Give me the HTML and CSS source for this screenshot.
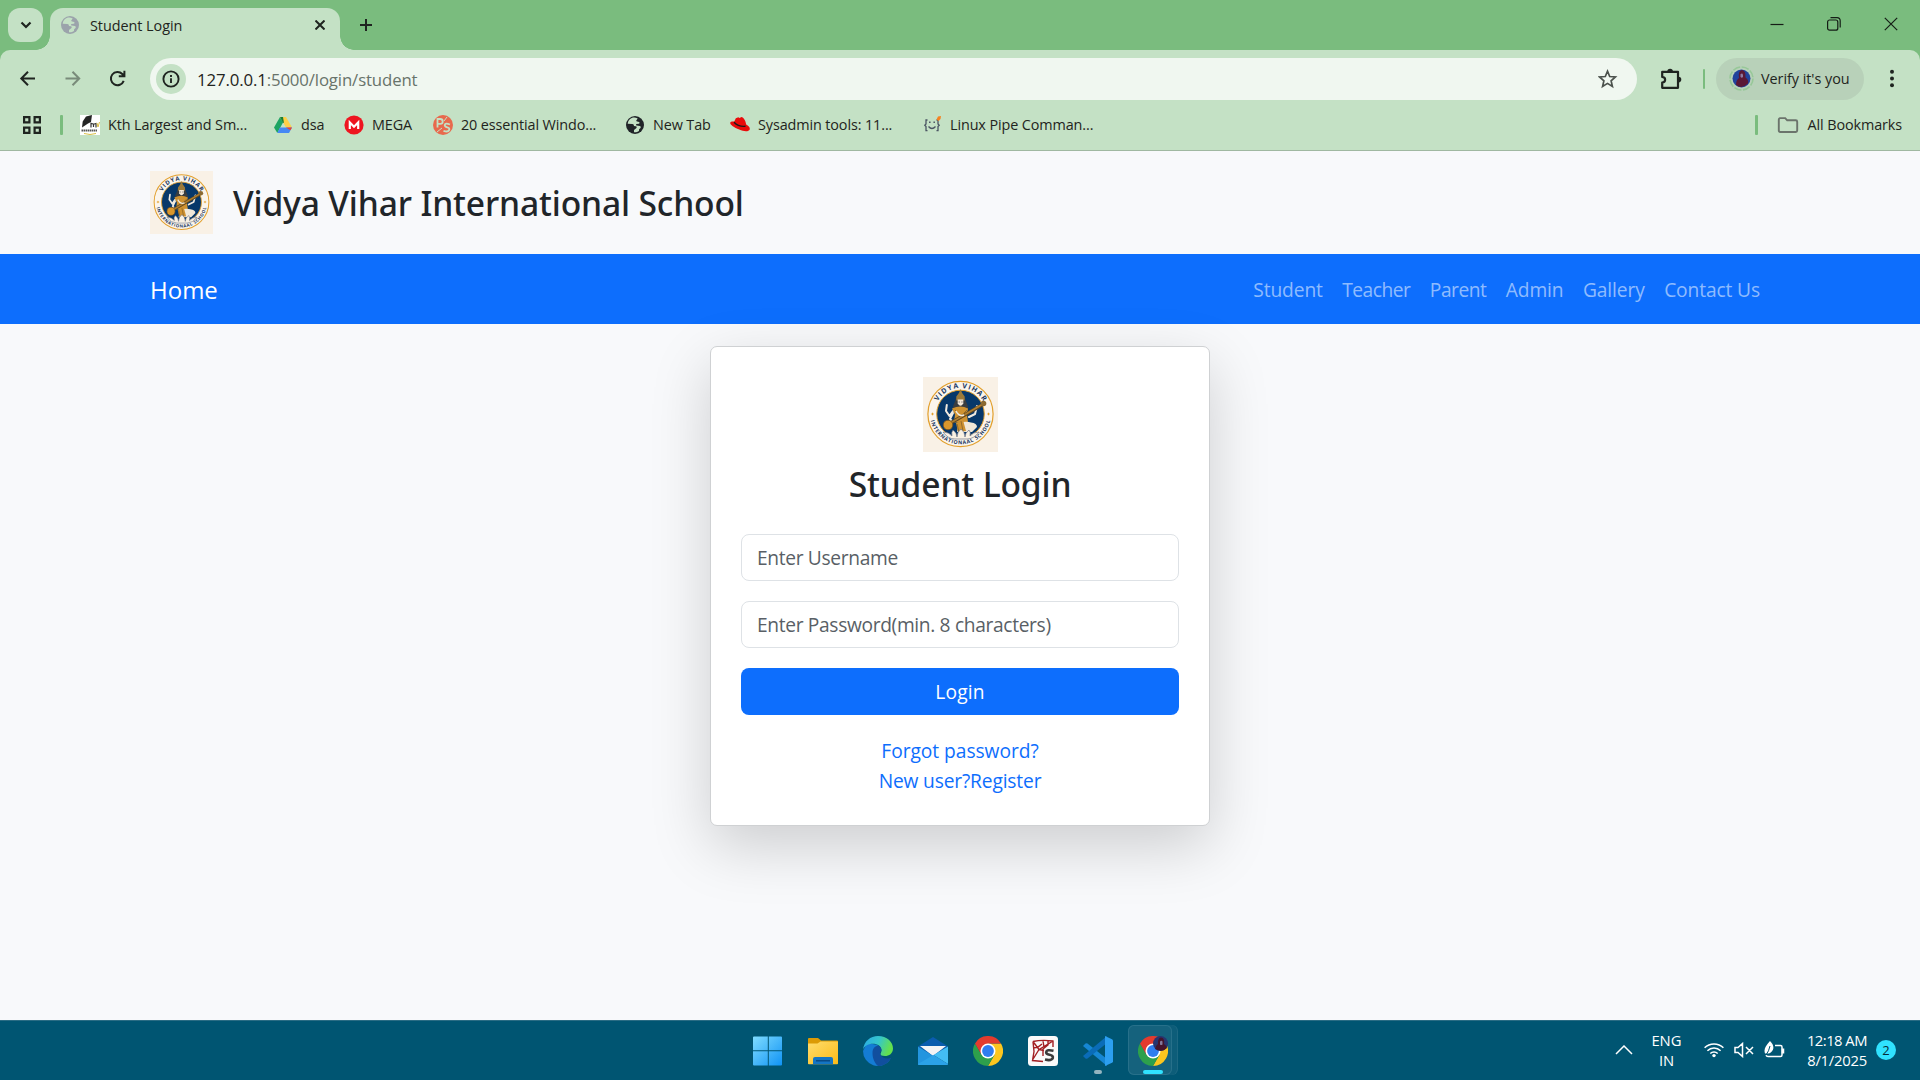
FILE: index.html
```html
<!DOCTYPE html>
<html lang="en">
<head>
<meta charset="utf-8">
<title>Student Login</title>
<link rel="stylesheet" href="styles.css">
</head>
<body>
<svg width="0" height="0" class="defs" aria-hidden="true">
  <defs>
    <symbol id="globe" viewBox="0 0 18 18">
      <circle cx="9" cy="9" r="9" fill="currentColor"/>
      <path class="land" d="M6.2 1.8C3.6 2.8 1.9 5 1.7 7.8l4.6.2c1.1.1 1.8.9 1.6 2l1.9.2c1 .2 1.2 1.3.4 2L8 14v2.3c1.9.2 3.600-.3 5-1.400l.1-1.600 1.400-1.200c.5-.8.2-1.600-.7-2l-3.200-.5c-.8-.3-.8-1.300-.1-1.700l2.300-.2c.8-.2 1-1.200.3-1.700l-2-.4c-1-.2-1.100-1.400-.3-1.900l.9-1.100C9.700 1.300 8 1.200 6.200 1.800z"/>
    </symbol>
    <symbol id="chrome" viewBox="0 0 30 30">
      <path fill="#fcc61f" d="M15 7.500h13A15 15 0 0 1 15 30l6.500-11.250z"/>
      <path fill="#2da04c" d="M2 7.500A15 15 0 0 0 15 30l6.500-11.250L15 15l-6.500 3.750z"/>
      <path fill="#e33b2e" d="M2 7.500A15 15 0 0 1 28 7.500H15l-6.500 11.250z"/>
      <circle cx="15" cy="15" r="7.500" fill="#fff"/>
      <circle cx="15" cy="15" r="5.900" fill="#2f7df0"/>
    </symbol>
    <symbol id="crest" viewBox="0 0 75 75">
      <path fill="#f9f1e6" d="M0 0h75v75H0z"/>
      <circle cx="37.500" cy="37" r="32.600" fill="#fbf5ec" stroke="#e2a02e" stroke-width="1.200"/>
      <circle cx="37.500" cy="37" r="23.800" fill="#07386a" stroke="#e2a02e" stroke-width="1"/>
      <path id="arc-top" fill="none" d="M11.500 37a26 26 0 0 1 52 0"/>
      <path id="arc-bottom" fill="none" d="M7.100 37a30.400 30.400 0 0 0 60.800 0"/>
      <text class="crest-top"><textPath href="#arc-top" startOffset="50%" textLength="55">VIDYA VIHAR</textPath></text>
      <text class="crest-bottom"><textPath href="#arc-bottom" startOffset="50%" textLength="82">INTERNATIONAAL SCHOOL</textPath></text>
      <path fill="#e2a02e" d="m9.500 35.200.6 1.200 1.300.6-1.300.6-.6 1.200-.6-1.200-1.300-.6 1.300-.6zM65.500 35.200l.6 1.200 1.300.6-1.300.6-.6 1.200-.6-1.200-1.300-.6 1.300-.6z"/>
      <path fill="#3a3d40" d="M33 21c-1 5-4 8-3 12h15c1-4-2-7-3-12z"/>
      <path fill="#9c7a3a" d="m37.500 12 1.600 4 2.600 3.500v4h-8.400v-4l2.600-3.500z"/>
      <path fill="#f3e8da" d="M34.700 22.500h5.600v4q-2.800 4.500-5.600 0z"/>
      <path stroke="#3a3d40" stroke-width=".6" d="M35.500 25h1.500M38.200 25h1.500"/>
      <path fill="none" stroke="#f1eadf" stroke-width="2" stroke-linecap="round" stroke-linejoin="round" d="M30 34l-3.500 5-3.500-5 .8-6M46 40l6-3 2-8M30 36l-3 6 3 3"/>
      <path fill="#cf9231" d="M29 31.500q8.500-4 16 0l-1 6 1 8H31l1-8z"/>
      <path fill="#f1e8d8" d="M36 46q7-2 12-.5 6 .5 6 4.500l-5 5H34z"/>
      <path fill="#cf9231" d="m33 46 7-3 3 11-8 1z"/>
      <path stroke="#7b5a24" stroke-width=".7" d="m34 47 2 8M38 44l2 10M32 33l3 3M44 33l-3 3"/>
      <path fill="none" stroke="#5d4521" stroke-width="3.600" d="m24 48 35-20"/>
      <path fill="none" stroke="#b07f30" stroke-width="1.800" d="m24 48 36-21"/>
      <circle cx="25" cy="48" r="4.800" fill="#d9972c" stroke="#6b4a1c" stroke-width=".7"/>
      <circle cx="60.500" cy="26.500" r="2.800" fill="#8b6a32"/>
      <path fill="none" stroke="#f1eadf" stroke-width="1.600" d="M33 34q3 6 8 4"/>
      <path fill="#f9f1e3" stroke="#54607a" stroke-width=".6" d="M20 55q6 0 9 4-1-4 1-6 4 3 4 7 0-5 4-8 4 3 4 8 0-4 4-7 2 2 1 6 3-4 9-4-5 7-12 7H32q-7 0-12-7z"/>
    </symbol>
  </defs>
</svg>

<div class="browser">
  <div class="tabstrip">
    <div class="tab-search"><svg width="12" height="8" viewBox="0 0 12 8"><path d="m1.500 1.500 4.500 4.500 4.500-4.500"/></svg></div>
    <div class="tab">
      <svg class="favicon" width="18" height="18"><use href="#globe"/></svg>
      <span class="tab-title">Student Login</span>
      <svg class="tab-close" width="10" height="10" viewBox="0 0 10 10"><path d="m.5.5 9 9M9.500.5l-9 9"/></svg>
    </div>
    <svg class="new-tab" width="14" height="14" viewBox="0 0 14 14"><path d="M7 1v12M1 7h12"/></svg>
    <div class="window-controls">
      <svg width="14" height="14" viewBox="0 0 14 14"><path d="M.5 7.500h13"/></svg>
      <svg width="14" height="14" viewBox="0 0 14 14"><rect x=".6" y="3" width="10.200" height="10.200" rx="2"/><path d="M3.500.6h6.500a3.200 3.200 0 0 1 3.200 3.200v6.800"/></svg>
      <svg width="14" height="14" viewBox="0 0 14 14"><path d="m.8.8 12.400 12.400M13.200.8.8 13.200"/></svg>
    </div>
  </div>

  <div class="chrome-body">
    <div class="toolbar">
      <div class="nav-buttons">
        <svg width="20" height="20" viewBox="0 0 20 20"><path d="M17 9.500H3.500M10 2.800 3.300 9.500l6.700 6.700"/></svg>
        <svg class="disabled" width="20" height="20" viewBox="0 0 20 20"><path d="M2.500 9.500H16M9.500 2.800l6.700 6.700-6.700 6.700"/></svg>
        <svg width="20" height="20" viewBox="0 0 20 20"><path d="M15.700 11.800A6.600 6.600 0 1 1 14.300 5L16 7M10.800 7.300h5.600V1.800"/></svg>
      </div>
      <div class="omnibox">
        <span class="site-info"><svg width="18" height="18" viewBox="0 0 18 18"><circle cx="9" cy="9" r="7.600"/><path d="M9 8.200v4.700M9 5v2"/></svg></span>
        <span class="url">127.0.0.1<span class="path">:5000/login/student</span></span>
        <svg class="star" width="20" height="20" viewBox="0 0 20 20"><path d="m9.500 2.200 2.200 5.300 5.700.5-4.300 3.800 1.300 5.600-4.900-3-4.900 3 1.300-5.600L1.600 8l5.700-.5z"/></svg>
      </div>
      <svg class="extensions" width="22" height="22" viewBox="0 0 22 22"><path d="M2.200 3.800h15.800v16H2.200v-5.200c3.900-.4 3.900-5.300 0-5.700z"/><path class="solid" d="M7.300 3.500a2.800 2.800 0 0 1 5.600 0zM18.500 8.800a2.800 2.800 0 0 1 0 5.600z"/></svg>
      <i class="divider"></i>
      <div class="profile">
        <svg width="26" height="26" viewBox="0 0 26 26"><circle cx="12.500" cy="12.500" r="11.500" fill="none" stroke="#97c898" stroke-width="1.600" stroke-dasharray="7.500 1.500"/><circle cx="12.500" cy="12.500" r="9" fill="#21439c"/><path fill="#5a1835" d="M7 19q0-5 3-7-1-7.500 3-8 4 .5 3.500 7.500 3.500 2.500 2.500 6-6 6-12 1.500z"/><path fill="#8c7aa3" d="M11.500 8.500q1.500-2 2.500 0v2.500q-1.200 1.500-2.500 0z"/></svg>
        <span>Verify it's you</span>
      </div>
      <svg class="menu" width="4" height="20" viewBox="0 0 4 20"><circle cx="2" cy="2.700" r="2"/><circle cx="2" cy="9.500" r="2"/><circle cx="2" cy="16.300" r="2"/></svg>
    </div>

    <div class="bookmarks">
      <svg class="apps" width="19" height="18" viewBox="0 0 19 18"><path d="M1.100 1.100h5.300v5.300H1.100zM11.600 1.100h5.300v5.300h-5.300zM1.100 11.600h5.300v5.300H1.100zM11.600 11.600h5.300v5.300h-5.300z"/></svg>
      <i class="divider thick"></i>
      <div class="bookmark-list">
        <div class="bookmark">
          <svg width="20" height="20" viewBox="0 0 20 20"><path fill="#fff" d="M0 0h20v20H0z"/><path fill="#252525" d="M6 1.500 12 0l-1 7-3 1.500-6 4 .7-6z"/><path fill="none" stroke="#333" stroke-width="1.200" d="M11 12.500V8.300l2.500.8v3M13.500 9.300l2.500-.8v4"/><path fill="none" stroke="#d9be45" d="m17 8 1 4 1.500-5M4 18.500q6 2 12 0"/><path stroke="#555" stroke-width="2" stroke-dasharray="1.500 .5" d="M1.500 15.500h16"/></svg>
          <span>Kth Largest and Sm...</span>
        </div>
        <div class="bookmark">
          <svg width="20" height="20" viewBox="0 0 20 20"><path fill="#1da463" d="m7 2 3 5.500L4.300 18 1 12.500z"/><path fill="#ffcf48" d="M7 2h6l6 10.500h-6z"/><path fill="#4688f4" d="M4.300 18 7 12.500h12L16 18z"/><path fill="#188038" d="M7 2h3l1 6-1.300-.5z"/><path fill="#ea4335" d="m13 12.500 6 0-1.600 2.800z"/></svg>
          <span>dsa</span>
        </div>
        <div class="bookmark">
          <svg width="20" height="20" viewBox="0 0 20 20"><circle cx="10" cy="10" r="9.600" fill="#ee1520"/><path fill="none" stroke="#fff" stroke-width="2.200" d="M5.800 14V7.500l4.200 4.200 4.200-4.200V14"/></svg>
          <span>MEGA</span>
        </div>
        <div class="bookmark">
          <svg width="20" height="20" viewBox="0 0 20 20"><circle cx="10" cy="10" r="10" fill="#e8694d"/><path fill="none" stroke="#c4e1c5" stroke-width="1.800" d="M4.500 12.500V4h2.800a2.400 2.400 0 0 1 0 4.800H4.500M17 9.500q-5-2-5.300.6 0 1.700 2.500 2.200 2.800.7 2 2.700-1.200 2.500-5.700.8"/><path stroke="#c4e1c5" d="m11 6 3-4M4 17l5-4"/></svg>
          <span>20 essential Windo...</span>
        </div>
        <div class="bookmark">
          <svg class="dark-globe" width="20" height="20" viewBox="-1 -1 20 20"><use href="#globe" width="18" height="18"/></svg>
          <span>New Tab</span>
        </div>
        <div class="bookmark">
          <svg width="20" height="20" viewBox="0 0 20 20"><path fill="#e90b0b" d="M5.800 3.200 8.300 2.300l1.200.7 2-1c2 .3 4.200 3.800 4.700 7.500 2.500 1.200 4 3.200 3.500 5-1 2.300-5.500 2.300-10.500.1C4 12.500 0 9.500.2 7.800.4 6.800 2 6.400 4.300 6.600z"/><path fill="none" stroke="#1b1b1b" stroke-width="1.400" d="M4 7.300q4.500 4.700 11.500 4"/></svg>
          <span>Sysadmin tools: 11...</span>
        </div>
        <div class="bookmark">
          <svg width="20" height="20" viewBox="-1 0 20 20"><path fill="none" stroke="#4b5563" stroke-width="1.300" d="M4.500 5H3v4l-1.200 1.300L3 11.600v4h1.500M13.500 5H15v4l1.200 1.300-1.200 1.300v4h-1.500M5.500 11.500q3.500 4 7 0"/><path stroke="#4b5563" stroke-width="1.500" d="M6.800 6.500V8M11.200 6.500V8"/><path fill="#f58220" d="m13.500 4.500 1.500-3L18 1l-.5 3-2 2z"/></svg>
          <span>Linux Pipe Comman...</span>
        </div>
      </div>
      <i class="divider thick end"></i>
      <svg class="folder" width="22" height="18" viewBox="0 0 22 18"><path d="M1.800 3.500c0-.9.500-1.400 1.400-1.400h5l2 2.200h8.600c.9 0 1.400.5 1.400 1.400v8.900c0 .9-.5 1.400-1.400 1.400H3.200c-.9 0-1.400-.5-1.400-1.400z"/></svg>
      <span class="all">All Bookmarks</span>
    </div>
  </div>
</div>

<div class="page">
  <header class="school-header">
    <svg class="school-logo"><use href="#crest"/></svg>
    <h1>Vidya Vihar International School</h1>
  </header>
  <nav class="navbar">
    <a class="brand">Home</a>
    <div class="nav-links">
      <a>Student</a><a class="tight">Teacher</a><a class="tight">Parent</a><a>Admin</a><a>Gallery</a><a>Contact Us</a>
    </div>
  </nav>
  <main>
    <form class="card">
      <svg class="card-logo"><use href="#crest"/></svg>
      <h2>Student Login</h2>
      <input type="text" placeholder="Enter Username">
      <input type="password" placeholder="Enter Password(min. 8 characters)">
      <button type="button">Login</button>
      <a>Forgot password?</a>
      <a class="register">New user?Register</a>
    </form>
  </main>
</div>

<footer class="taskbar">
  <div></div>
  <div class="apps-row">
    <span class="app"><svg width="30" height="30" viewBox="0 0 30 30"><defs><linearGradient id="win" x1="0" y1="0" x2="1" y2="1"><stop offset="0" stop-color="#7fdcff"/><stop offset="1" stop-color="#1093f5"/></linearGradient></defs><path fill="url(#win)" d="M1 .500h13.800v13.800H0V1.500q0-1 1-1zM15.800.500H28q1 0 1 1v12.800H15.800zM0 15.300h14.800v14.200H1q-1 0-1-1zM15.800 15.300H29v13.200q0 1-1 1H15.800z"/></svg></span>
    <span class="app"><svg width="30" height="30" viewBox="0 0 30 30"><defs><linearGradient id="fold" x2="1" y2="1"><stop offset="0" stop-color="#ffdc6d"/><stop offset="1" stop-color="#fbbb17"/></linearGradient></defs><path fill="#dc9a05" d="M0 3q0-1 1-1h9l3 2.500h16q1 0 1 1v8H0z"/><path fill="url(#fold)" d="M0 7.500h9.500l3-2H30v22q0 .8-.8.8H.8q-.8 0-.8-.8z"/><path fill="#1475c4" d="M5 28.300V23q0-2 2-2h16q2 0 2 2v5.300z"/><path stroke="#07447d" stroke-width="1.300" d="M8 24.800h14"/></svg></span>
    <span class="app"><svg width="30" height="30" viewBox="0 0 30 30"><defs><linearGradient id="edge" x2="1" y2=".3"><stop offset="0" stop-color="#2aa9e8"/><stop offset=".55" stop-color="#35c6cb"/><stop offset="1" stop-color="#64e14d"/></linearGradient></defs><path fill="#147cd4" d="M0 15a15 15 0 0 0 27 9q-4 2-8 1l-8-8 4-8L4 7z"/><path fill="url(#edge)" d="M0 14C1 5 7.500 0 15 0c9 0 15 6 15 12.500 0 5-4 7.500-8 7.500-3 0-5-1-4.500-2.300C19.500 15 19 9.500 12.500 8 6 7 1 10 0 14z"/><path fill="#114f9e" d="M9.500 17c0-5 3-7 5.500-7.500 2.500 1 3.500 3 3.500 5-3 2-1 8 6 8 2 0 3.500-.8 3.500-.3-2 4-7.500 7.800-13 7.800-3-2.500-5.500-7-5.500-13z"/></svg></span>
    <span class="app"><svg width="30" height="30" viewBox="0 0 30 30"><path fill="#0a5cae" d="M0 10.500 15 1l15 9.500-15 10z"/><path fill="#f3f3f5" d="M2 10h26L15 20z"/><path fill="#2395df" d="M0 10.500 30 29H1q-1 0-1-1z"/><path fill="#43bdf3" d="M30 10.500V28L15.500 19z"/><path fill="#2ba2e8" d="M0 28 15.500 19 30 28q0 1-1 1H1q-1 0-1-1z"/></svg></span>
    <span class="app"><svg width="30" height="30"><use href="#chrome"/></svg></span>
    <span class="app"><svg width="30" height="30" viewBox="0 0 30 30"><rect width="30" height="30" rx="3.500" fill="#fafafa"/><path fill="none" stroke="#a31f23" stroke-width="1.400" d="M5 5.500q9-2 20-.5v6M5 5.500l1 10-1.500 9L15 25.500M5 5.500l6 8L25 5M11 13.500 4.500 24M11 13.500l5 1M15 5l1 6M5.500 12l4.500-1 4-3M20 5v4l-5 4v7"/><path fill="none" stroke="#3b3b3b" stroke-width="2.600" d="M25.500 14.700q-7-1.500-7.300 1.500 0 2 3.300 2.600 4 .8 3.300 3.300-1.200 3-7.800 1.500"/></svg></span>
    <span class="app running"><svg width="30" height="30" viewBox="0 0 30 30"><path fill="#1687d4" d="m0 10 2.500-2.500q1-.5 2 0L24 23v7z"/><path fill="#0a6cb8" d="m0 20 2.500 2.500q1 .5 2 0L24 7V0z"/><path fill="#2c9ff0" d="M22 0l7 3.300q1 .5 1 1.500v20.400q0 1-1 1.500L22 30z"/></svg></span>
    <span class="app active"><svg width="30" height="30" viewBox="0 0 30 30"><use href="#chrome" width="30" height="30"/><circle cx="22.500" cy="7.500" r="7.500" fill="#28346f"/><path fill="#45142c" d="M17 13q1-4 3-5-.5-6 3-6.500Q27 2 26 8q3 2 3 4-5 5-12 1z"/><path fill="#85789a" d="M22 5.500q1.500-1.500 2.500 0v3q-1.500 1-2.500 0z"/></svg></span>
  </div>
  <div class="tray">
    <svg class="chevron" width="18" height="10" viewBox="0 0 18 10"><path d="m1 9 8-8 8 8"/></svg>
    <div class="lang">ENG<br>IN</div>
    <div class="status">
      <svg width="20" height="16" viewBox="0 0 20 16"><path d="M.6 5.800a13.300 13.300 0 0 1 18.800 0M3.400 8.700a9.300 9.300 0 0 1 13.200 0M6.300 11.500a5.200 5.200 0 0 1 7.400 0"/><circle class="fill" cx="10" cy="13.600" r="1.700"/></svg>
      <svg width="20" height="16" viewBox="0 0 20 16"><path d="M1 5.500h3L8.500 1.500v13L4 10.500H1zM12 5l7 7M19 5l-7 7"/></svg>
      <svg width="21" height="18" viewBox="0 0 21 18"><path d="M11 4.500h5.500q1.500 0 1.500 1.500v8q0 1.500-1.500 1.500H4q-1.500 0-2-1.200"/><path class="cap" d="M19 7.500v5"/><path class="fill" d="M6 0c3 3 4 6 3 8.500S5.500 12.500 4.500 12.500H1C-.5 8 1.500 5 6 0z"/><path class="vein" d="M6 5q-1 5-4 9"/></svg>
    </div>
    <div class="clock">12:18 AM<br><span>8/1/2025</span></div>
    <span class="badge">2</span>
  </div>
</footer>
</body>
</html>
```
FILE: styles.css
```css
* { box-sizing: border-box; }

body {
  margin: 0;
  width: 1920px;
  height: 1080px;
  display: flex;
  flex-direction: column;
  overflow: hidden;
  background: #f8f9fb;
  color: #212529;
  font-family: "Open Sans", "Noto Sans", sans-serif;
}

svg { display: block; flex: none; }
.defs { position: absolute; }

/* Browser window */
.browser {
  height: 151px;
  flex: none;
  background: #7abc7e;
  color: #1f2420;
  font-size: 14.4px;
  letter-spacing: -0.11px;
}

.tabstrip {
  height: 50px;
  display: flex;
  padding: 8px 22px 0 8px;
}

.tab-search {
  width: 35px;
  height: 34px;
  border-radius: 12px;
  background: #c4e1c5;
  display: grid;
  place-items: center;
}

.tab-search path { fill: none; stroke: #1f2420; stroke-width: 2.2; }

.tab {
  position: relative;
  width: 290px;
  margin-left: 7px;
  padding: 0 15px 8px 11px;
  display: flex;
  align-items: center;
  background: #c4e1c5;
  border-radius: 13px 13px 0 0;
}

.tab::before,
.tab::after {
  content: "";
  position: absolute;
  bottom: 0;
  width: 14px;
  height: 14px;
}

.tab::before { left: -14px; background: radial-gradient(circle at 0 0, transparent 13.5px, #c4e1c5 14px); }
.tab::after { right: -14px; background: radial-gradient(circle at 100% 0, transparent 13.5px, #c4e1c5 14px); }

.favicon { color: #9ba3ab; }
.land { fill: #c4e1c5; }
.tab-title { margin-left: 11px; flex: 1; letter-spacing: -0.04px; }
.tab-close path { stroke: #1f2420; stroke-width: 2; }
.new-tab { margin: 10px 0 0 19px; }
.new-tab path { stroke: #1f2420; stroke-width: 2; }

.window-controls { margin: 9px 0 0 auto; display: flex; gap: 43px; }
.window-controls path,
.window-controls rect { fill: none; stroke: #151d16; stroke-width: 1.2; }

.chrome-body {
  height: 101px;
  background: #c4e1c5;
  border-radius: 10px 10px 0 0;
  border-bottom: 1px solid #a0b8a1;
}

.toolbar {
  height: 58px;
  padding: 8px 26px 8px 18px;
  display: flex;
  align-items: center;
}

.nav-buttons { width: 132px; display: flex; gap: 25px; }
.nav-buttons path { fill: none; stroke: #1f2420; stroke-width: 2; }
.nav-buttons .disabled { opacity: 0.45; }

.omnibox {
  width: 1487px;
  height: 42px;
  border-radius: 21px;
  background: #f0f7f0;
  display: flex;
  align-items: center;
  padding: 0 19px 0 6px;
}

.site-info {
  width: 30px;
  height: 30px;
  border-radius: 50%;
  background: #c4e1c5;
  display: grid;
  place-items: center;
}

.site-info circle,
.site-info path { fill: none; stroke: #1f2420; stroke-width: 1.9; }

.url { margin-left: 11px; flex: 1; font-size: 16.8px; letter-spacing: -0.13px; }
.path { color: #68736a; }
.star path { fill: none; stroke: #4b514c; stroke-width: 1.7; }

.extensions { margin-left: 23px; }
.extensions path { fill: none; stroke: #1f2420; stroke-width: 2.2; stroke-linejoin: round; }
.extensions .solid { fill: #1f2420; stroke: none; }

.divider { width: 2px; height: 20px; margin: 0 11px 0 21px; background: #7abc7e; border-radius: 1px; }

.profile {
  width: 148px;
  height: 42px;
  border-radius: 21px;
  background: #b8d1b9;
  display: flex;
  align-items: center;
  gap: 6px;
  padding-left: 13px;
  letter-spacing: -0.04px;
}

.profile span { padding-bottom: 2px; }
.menu { margin-left: auto; }
.menu circle { fill: #1f2420; }

.bookmarks {
  height: 34px;
  display: flex;
  align-items: center;
  padding: 0 18px 0 23px;
}

.apps path { fill: none; stroke: #1f2420; stroke-width: 2.2; }
.divider.thick { width: 3px; margin: 0 17px 0 18px; }
.divider.end { margin: 0 19px 0 auto; }

.bookmark-list {
  display: grid;
  grid-template-columns: 193px 71px 89px 192px 105px 192px auto;
}

.bookmark { display: flex; align-items: center; gap: 8px; white-space: nowrap; }
.bookmark span,
.all { padding-bottom: 2px; }
.dark-globe { color: #202428; }
.folder { margin-right: 9px; }
.folder path { fill: none; stroke: #6b746c; stroke-width: 1.9; }

/* Website */
.page { flex: 1; display: flex; flex-direction: column; }

.school-header {
  height: 103px;
  padding: 20px 150px;
  display: flex;
  align-items: center;
  gap: 20px;
}

.school-logo { width: 63px; height: 63px; }

.crest-top,
.crest-bottom {
  font-family: "Open Sans", sans-serif;
  font-weight: 700;
  fill: #17365f;
  text-anchor: middle;
}

.crest-top { font-size: 7px; }
.crest-bottom { font-size: 5.2px; }

h1,
h2 {
  margin: 0;
  font-family: "Noto Sans", sans-serif;
  font-weight: 500;
  font-size: 33.6px;
  line-height: 42px;
  letter-spacing: -0.14px;
}

.navbar {
  height: 70px;
  padding: 0 160px 0 150px;
  display: flex;
  align-items: center;
  justify-content: space-between;
  background: #0d6efd;
}

.brand { font-size: 24px; color: #fff; }
.nav-links { display: flex; gap: 19.5px; font-size: 19.2px; letter-spacing: -0.12px; color: rgba(255, 255, 255, 0.55); }
.nav-links .tight { letter-spacing: -0.5px; }

main { display: flex; justify-content: center; padding-top: 22px; }

.card {
  width: 500px;
  height: 480px;
  padding: 30px 30px 28px;
  display: flex;
  flex-direction: column;
  align-items: center;
  background: #fff;
  border: 1px solid #cfd1d3;
  border-radius: 7px;
  box-shadow: 0 20px 60px rgba(0, 0, 0, 0.175);
  font-size: 19.2px;
  line-height: 30px;
}

.card-logo { width: 75px; height: 75px; margin-bottom: 11px; }
.card h2 { margin-bottom: 29px; }

.card input,
.card button {
  flex: none;
  width: 100%;
  height: 47px;
  margin: 0 0 20px;
  padding: 0 15px;
  border: 1px solid #dee2e6;
  border-radius: 8px;
  font: inherit;
  background: #fff;
}

.card input { letter-spacing: -0.34px; }
.card input::placeholder { color: #595f66; opacity: 1; }
.card button { margin-bottom: 21px; border: 0; background: #0d6efd; color: #fff; letter-spacing: 0.15px; }
.card a { color: #0d6efd; letter-spacing: -0.04px; }
.card .register { letter-spacing: -0.16px; }

/* Taskbar */
.taskbar {
  height: 60px;
  flex: none;
  display: grid;
  grid-template-columns: 1fr 440px 1fr;
  background: #005572;
  border-top: 1px solid #2a6c84;
  color: #fff;
}

.apps-row { display: flex; }
.app { position: relative; width: 55px; display: grid; place-items: center; }

.running::after,
.active::after {
  content: "";
  position: absolute;
  bottom: 6px;
  width: 8px;
  height: 4px;
  border-radius: 2px;
  background: #93b4c0;
}

.active::after { width: 20px; background: #30e2ff; }

.active::before {
  content: "";
  position: absolute;
  left: 3px;
  top: 4px;
  width: 44px;
  height: 50px;
  border-radius: 6px;
  background: #15627d;
  box-shadow: inset 0 0 0 1px #27708a, 5px 0 0 #0d5d79, 6px 0 0 #1d6882;
}

.active svg { position: relative; }

.tray {
  display: flex;
  align-items: center;
  justify-content: flex-end;
  padding: 0 24px 2px 0;
  font-size: 14.8px;
  line-height: 20px;
}

.tray path { fill: none; stroke: #fff; stroke-width: 1.5; }
.tray .fill { fill: #fff; stroke: none; }
.tray .cap { stroke-width: 2.5; }
.tray .vein { stroke: #005572; stroke-width: 1; }
.lang { margin: 0 22px 0 18px; width: 31px; text-align: center; letter-spacing: -0.1px; }
.status { display: flex; align-items: center; gap: 10px; }
.clock { margin: 0 9px 0 22px; text-align: right; letter-spacing: -0.52px; }
.clock span { letter-spacing: -0.22px; }

.badge {
  width: 20px;
  height: 20px;
  border-radius: 50%;
  background: #30e2ff;
  color: #062c38;
  display: grid;
  place-items: center;
  font-size: 13px;
}
```
